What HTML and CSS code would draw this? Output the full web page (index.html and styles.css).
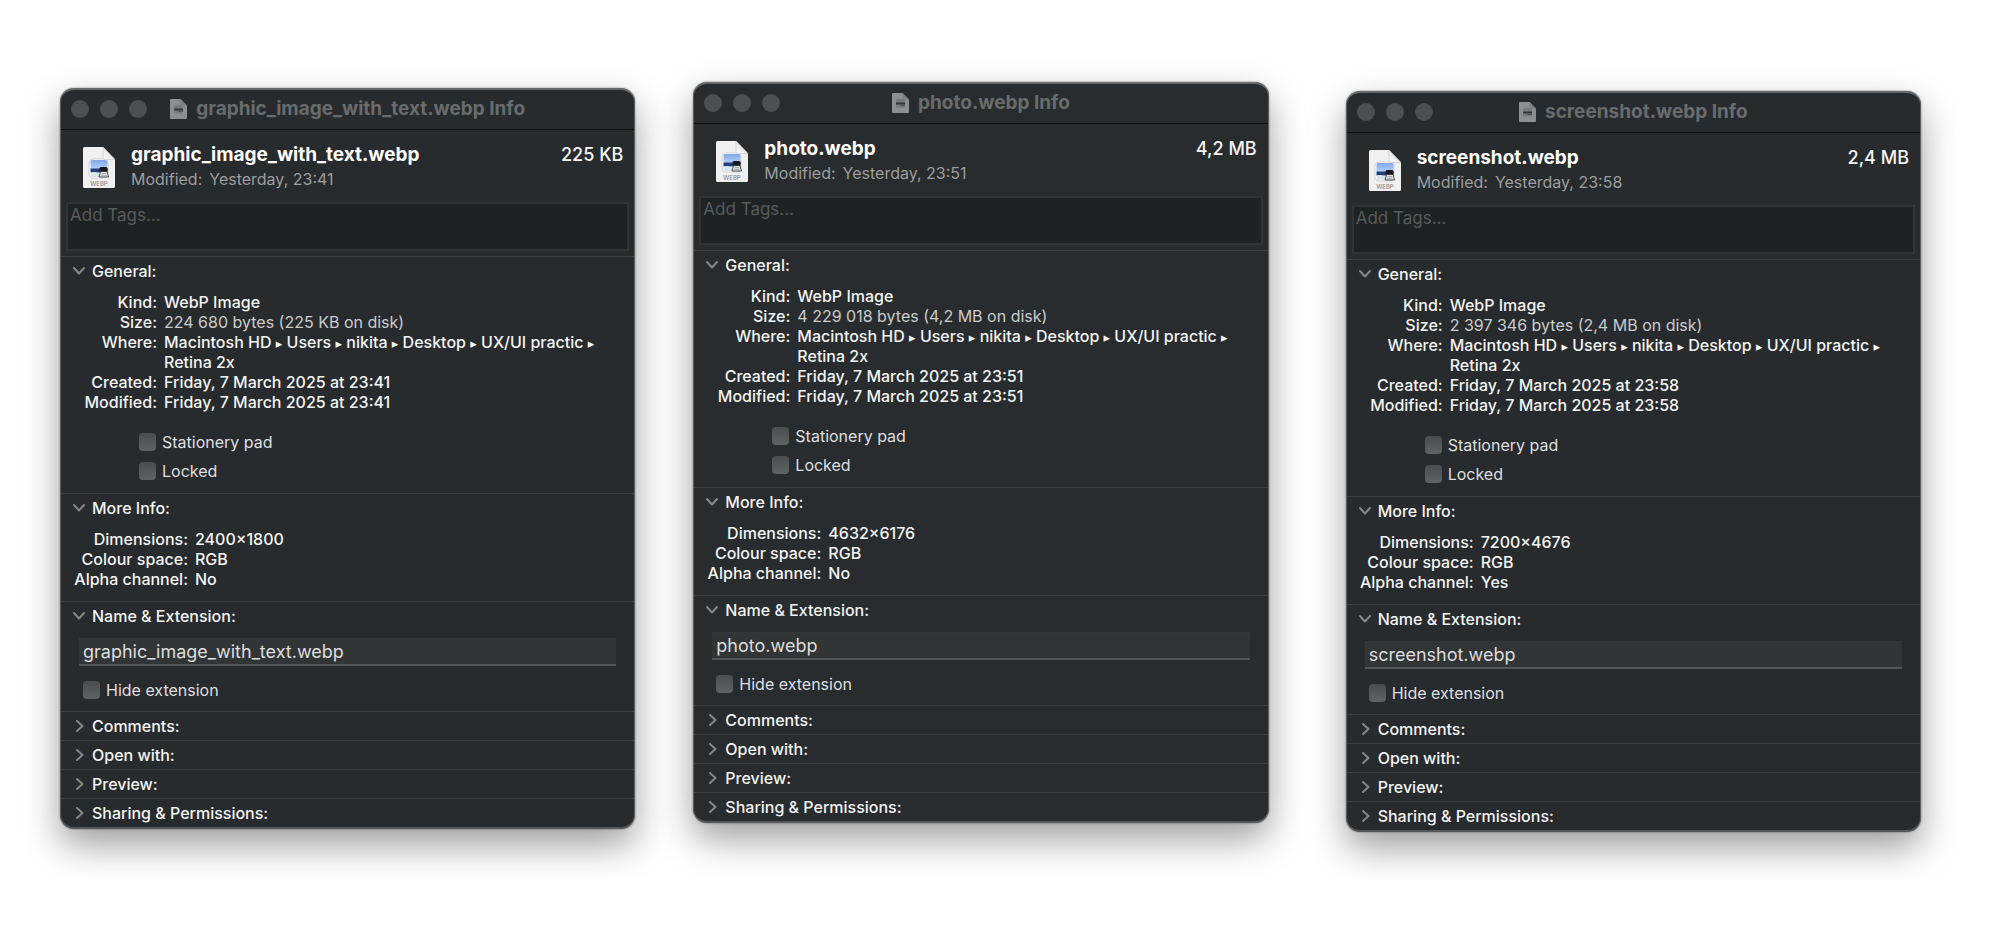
FILE: index.html
```html
<!DOCTYPE html>
<html lang="en">
<head>
<meta charset="utf-8">
<title>File info</title>
<link rel="stylesheet" href="styles.css">
</head>
<body>
<svg class="defs" aria-hidden="true">
  <defs>
    <linearGradient id="sky" x1="0" y1="0" x2="0" y2="1"><stop offset="0" stop-color="#7fa6ea"/><stop offset="1" stop-color="#b5d3f7"/></linearGradient>
    <linearGradient id="fold" x1="0" y1="1" x2="1" y2="0"><stop offset="0" stop-color="#ffffff"/><stop offset="1" stop-color="#cfcfcf"/></linearGradient>
    <symbol id="doc" viewBox="0 0 32 41">
      <path d="M1.500 0H20L32 12.500V39.500Q32 41 30.500 41H1.500Q0 41 0 39.500V1.500Q0 0 1.500 0Z" fill="#f0f0f0"/>
      <path d="M20 0L32 12.500H21.500Q20 12.500 20 11Z" fill="url(#fold)" stroke="#bdbdbd" stroke-width=".5"/>
      <rect x="6" y="12" width="19" height="19" rx="4" fill="#fff" stroke="#c9c9c9" stroke-width=".8"/>
      <path d="M9 13H22.500Q24.500 13 24.500 15V22H7.500V14.500Q7.500 13 9 13Z" fill="url(#sky)"/>
      <rect x="7.500" y="21.500" width="17" height="4" fill="#243f80"/>
      <path d="M7.500 25.500L12 25L17 27V30H9Q7.500 30 7.500 28Z" fill="#d5e8ef"/>
      <rect x="16.500" y="20" width="8" height="5" rx="1.500" fill="#17191c"/>
      <path d="M17.500 24.500H24L25.500 30H16Z" fill="#e3e5e7" stroke="#25282b" stroke-width=".8"/>
      <path d="M18.500 26.500H23M18.300 28.300H23.500" stroke="#8e9295" stroke-width=".7"/>
      <text x="16" y="39" text-anchor="middle" class="doc-type">WEBP</text>
    </symbol>
    <symbol id="doc-small" viewBox="0 0 17 20">
      <path d="M1 0H10.500L17 6.500V19Q17 20 16 20H1Q0 20 0 19V1Q0 0 1 0Z" fill="#8c8e8f"/>
      <path d="M10.500 0L17 6.500H10.500Z" fill="#7d7f80"/>
      <rect x="4" y="6" width="9" height="8.500" rx="1.500" fill="#77797a"/>
      <path d="M4 9.500H13V11.500H4Z" fill="#353839"/>
      <path d="M8.500 12.500H13" stroke="#505354"/>
    </symbol>
    <symbol id="chevron" viewBox="0 0 12 8"><path d="M1 1L6 6.500L11 1" fill="none" stroke="#858788" stroke-width="2" stroke-linecap="round" stroke-linejoin="round"/></symbol>
  </defs>
</svg>
<main class="desktop">
  <article class="window">
    <header class="titlebar">
      <div class="lights"><button aria-label="Close"></button><button aria-label="Minimise"></button><button aria-label="Zoom"></button></div>
      <svg class="title-icon" aria-hidden="true"><use href="#doc-small"/></svg>
      <h1>graphic_image_with_text.webp Info</h1>
    </header>
    <div class="summary">
      <svg class="file-icon" aria-hidden="true"><use href="#doc"/></svg>
      <div class="file">
        <h2>graphic_image_with_text.webp</h2>
        <p><span>Modified:</span> <span>Yesterday, 23:41</span></p>
      </div>
      <span class="size">225 KB</span>
    </div>
    <textarea class="tags" aria-label="Tags" placeholder="Add Tags..."></textarea>
    <details open class="section">
      <summary><svg class="arrow" aria-hidden="true"><use href="#chevron"/></svg>General:</summary>
      <dl class="facts general">
        <dt>Kind:</dt><dd>WebP Image</dd>
        <dt>Size:</dt><dd class="soft">224 680 bytes (225 KB on disk)</dd>
        <dt>Where:</dt><dd>Macintosh HD <i>▸</i> Users <i>▸</i> nikita <i>▸</i> Desktop <i>▸</i> UX/UI practic <i>▸</i><br>Retina 2x</dd>
        <dt>Created:</dt><dd>Friday, 7 March 2025 at 23:41</dd>
        <dt>Modified:</dt><dd>Friday, 7 March 2025 at 23:41</dd>
      </dl>
      <div class="checks">
        <label><input type="checkbox">Stationery pad</label>
        <label><input type="checkbox">Locked</label>
      </div>
    </details>
    <details open class="section">
      <summary><svg class="arrow" aria-hidden="true"><use href="#chevron"/></svg>More Info:</summary>
      <dl class="facts more">
        <dt>Dimensions:</dt><dd>2400×1800</dd>
        <dt>Colour space:</dt><dd>RGB</dd>
        <dt>Alpha channel:</dt><dd>No</dd>
      </dl>
    </details>
    <details open class="section">
      <summary><svg class="arrow" aria-hidden="true"><use href="#chevron"/></svg>Name &amp; Extension:</summary>
      <div class="naming">
        <input class="name" type="text" aria-label="Name and extension" value="graphic_image_with_text.webp">
        <label><input type="checkbox">Hide extension</label>
      </div>
    </details>
    <details class="section"><summary><svg class="arrow" aria-hidden="true"><use href="#chevron"/></svg>Comments:</summary></details>
    <details class="section"><summary><svg class="arrow" aria-hidden="true"><use href="#chevron"/></svg>Open with:</summary></details>
    <details class="section"><summary><svg class="arrow" aria-hidden="true"><use href="#chevron"/></svg>Preview:</summary></details>
    <details class="section"><summary><svg class="arrow" aria-hidden="true"><use href="#chevron"/></svg>Sharing &amp; Permissions:</summary></details>
  </article>

  <article class="window second">
    <header class="titlebar">
      <div class="lights"><button aria-label="Close"></button><button aria-label="Minimise"></button><button aria-label="Zoom"></button></div>
      <svg class="title-icon" aria-hidden="true"><use href="#doc-small"/></svg>
      <h1>photo.webp Info</h1>
    </header>
    <div class="summary">
      <svg class="file-icon" aria-hidden="true"><use href="#doc"/></svg>
      <div class="file">
        <h2>photo.webp</h2>
        <p><span>Modified:</span> <span>Yesterday, 23:51</span></p>
      </div>
      <span class="size">4,2 MB</span>
    </div>
    <textarea class="tags" aria-label="Tags" placeholder="Add Tags..."></textarea>
    <details open class="section">
      <summary><svg class="arrow" aria-hidden="true"><use href="#chevron"/></svg>General:</summary>
      <dl class="facts general">
        <dt>Kind:</dt><dd>WebP Image</dd>
        <dt>Size:</dt><dd class="soft">4 229 018 bytes (4,2 MB on disk)</dd>
        <dt>Where:</dt><dd>Macintosh HD <i>▸</i> Users <i>▸</i> nikita <i>▸</i> Desktop <i>▸</i> UX/UI practic <i>▸</i><br>Retina 2x</dd>
        <dt>Created:</dt><dd>Friday, 7 March 2025 at 23:51</dd>
        <dt>Modified:</dt><dd>Friday, 7 March 2025 at 23:51</dd>
      </dl>
      <div class="checks">
        <label><input type="checkbox">Stationery pad</label>
        <label><input type="checkbox">Locked</label>
      </div>
    </details>
    <details open class="section">
      <summary><svg class="arrow" aria-hidden="true"><use href="#chevron"/></svg>More Info:</summary>
      <dl class="facts more">
        <dt>Dimensions:</dt><dd>4632×6176</dd>
        <dt>Colour space:</dt><dd>RGB</dd>
        <dt>Alpha channel:</dt><dd>No</dd>
      </dl>
    </details>
    <details open class="section">
      <summary><svg class="arrow" aria-hidden="true"><use href="#chevron"/></svg>Name &amp; Extension:</summary>
      <div class="naming">
        <input class="name" type="text" aria-label="Name and extension" value="photo.webp">
        <label><input type="checkbox">Hide extension</label>
      </div>
    </details>
    <details class="section"><summary><svg class="arrow" aria-hidden="true"><use href="#chevron"/></svg>Comments:</summary></details>
    <details class="section"><summary><svg class="arrow" aria-hidden="true"><use href="#chevron"/></svg>Open with:</summary></details>
    <details class="section"><summary><svg class="arrow" aria-hidden="true"><use href="#chevron"/></svg>Preview:</summary></details>
    <details class="section"><summary><svg class="arrow" aria-hidden="true"><use href="#chevron"/></svg>Sharing &amp; Permissions:</summary></details>
  </article>

  <article class="window third">
    <header class="titlebar">
      <div class="lights"><button aria-label="Close"></button><button aria-label="Minimise"></button><button aria-label="Zoom"></button></div>
      <svg class="title-icon" aria-hidden="true"><use href="#doc-small"/></svg>
      <h1>screenshot.webp Info</h1>
    </header>
    <div class="summary">
      <svg class="file-icon" aria-hidden="true"><use href="#doc"/></svg>
      <div class="file">
        <h2>screenshot.webp</h2>
        <p><span>Modified:</span> <span>Yesterday, 23:58</span></p>
      </div>
      <span class="size">2,4 MB</span>
    </div>
    <textarea class="tags" aria-label="Tags" placeholder="Add Tags..."></textarea>
    <details open class="section">
      <summary><svg class="arrow" aria-hidden="true"><use href="#chevron"/></svg>General:</summary>
      <dl class="facts general">
        <dt>Kind:</dt><dd>WebP Image</dd>
        <dt>Size:</dt><dd class="soft">2 397 346 bytes (2,4 MB on disk)</dd>
        <dt>Where:</dt><dd>Macintosh HD <i>▸</i> Users <i>▸</i> nikita <i>▸</i> Desktop <i>▸</i> UX/UI practic <i>▸</i><br>Retina 2x</dd>
        <dt>Created:</dt><dd>Friday, 7 March 2025 at 23:58</dd>
        <dt>Modified:</dt><dd>Friday, 7 March 2025 at 23:58</dd>
      </dl>
      <div class="checks">
        <label><input type="checkbox">Stationery pad</label>
        <label><input type="checkbox">Locked</label>
      </div>
    </details>
    <details open class="section">
      <summary><svg class="arrow" aria-hidden="true"><use href="#chevron"/></svg>More Info:</summary>
      <dl class="facts more">
        <dt>Dimensions:</dt><dd>7200×4676</dd>
        <dt>Colour space:</dt><dd>RGB</dd>
        <dt>Alpha channel:</dt><dd>Yes</dd>
      </dl>
    </details>
    <details open class="section">
      <summary><svg class="arrow" aria-hidden="true"><use href="#chevron"/></svg>Name &amp; Extension:</summary>
      <div class="naming">
        <input class="name" type="text" aria-label="Name and extension" value="screenshot.webp">
        <label><input type="checkbox">Hide extension</label>
      </div>
    </details>
    <details class="section"><summary><svg class="arrow" aria-hidden="true"><use href="#chevron"/></svg>Comments:</summary></details>
    <details class="section"><summary><svg class="arrow" aria-hidden="true"><use href="#chevron"/></svg>Open with:</summary></details>
    <details class="section"><summary><svg class="arrow" aria-hidden="true"><use href="#chevron"/></svg>Preview:</summary></details>
    <details class="section"><summary><svg class="arrow" aria-hidden="true"><use href="#chevron"/></svg>Sharing &amp; Permissions:</summary></details>
  </article>
</main>
</body>
</html>
```
FILE: styles.css
```css
* { box-sizing: border-box; }

body {
  margin: 0;
  background: #fff;
  color: #f3f4f4;
  font: 450 16px/20px Inter, "Liberation Sans", sans-serif;
}

h1, h2, p, dl, dd { margin: 0; }

.defs { position: absolute; width: 0; height: 0; }

.doc-type { font: 500 6px Inter, sans-serif; fill: #8a8a8a; }

.desktop {
  display: flex;
  align-items: flex-start;
  padding: 88px 78px 48px 60px;
}

.window {
  flex: 1;
  min-width: 0;
  background: #282b2d;
  border: 1px solid #5d6061;
  border-top: 2px solid #66696a;
  border-bottom: 2px solid #55585a;
  border-radius: 14px;
  box-shadow: 0 0 2px rgba(0, 0, 0, .5), 0 16px 36px rgba(0, 0, 0, .38);
  overflow: hidden;
}

.second { margin: -6px 0 0 58px; background: #282c2e; }
.third { margin: 3px 0 0 77px; }

.titlebar {
  position: relative;
  display: flex;
  align-items: center;
  justify-content: center;
  gap: 9px;
  height: 40px;
  padding-bottom: 1px;
  border-bottom: 1px solid #0d0f10;
}

.lights {
  position: absolute;
  left: 10px;
  top: 10px;
  display: flex;
  gap: 11px;
}

.lights button {
  width: 18px;
  height: 18px;
  padding: 0;
  border: 0;
  border-radius: 50%;
  background: #4d5051;
}

.title-icon { width: 17px; height: 20px; }

h1 { font-size: 19px; line-height: 24px; font-weight: 700; color: #696c6d; }

.summary {
  display: flex;
  align-items: flex-start;
  height: 72px;
  padding: 12px 11px 0 22px;
}

.file-icon { width: 32px; height: 41px; margin: 5px 16px 0 0; }

.file { flex: 1; }

h2 { font-size: 19px; line-height: 26px; font-weight: 700; color: #fff; }

.file p { display: flex; gap: 7px; line-height: 23px; font-weight: 400; color: #9b9d9e; }

.size { font-size: 18px; line-height: 26px; }

.tags {
  display: block;
  width: calc(100% - 10px);
  height: 49px;
  margin: 0 5px 5px;
  padding: 0 2px;
  border: 2px solid #313435;
  border-radius: 0;
  background: #1f2223;
  color: #f0f1f1;
  font: 400 17px/22px Inter, sans-serif;
  resize: none;
}

.tags::placeholder { color: #585b5c; }

.section { border-top: 1px solid #3b3e40; }

summary {
  display: flex;
  align-items: center;
  height: 28px;
  padding-left: 13px;
  list-style: none;
}

.section[open] > summary { height: 31px; padding: 0 0 3px 12px; }

.arrow { width: 12px; height: 8px; margin-right: 6px; transform: rotate(-90deg); }

.section[open] .arrow { margin-right: 7px; transform: none; }

.facts { display: grid; column-gap: 7px; padding: 4px 8px 0 12px; }

.general { grid-template-columns: 84px 1fr; }

.more { grid-template-columns: 115px 1fr; padding-bottom: 12px; }

dt { text-align: right; white-space: nowrap; }

dd i { font: 13px/1 "DejaVu Sans", sans-serif; }

.soft { color: #c9cbcc; font-weight: 400; }

.checks {
  display: grid;
  gap: 9px;
  padding: 20px 0 12px 78px;
}

label { display: flex; align-items: center; gap: 6px; font-weight: 400; color: #dedfe0; }

input[type="checkbox"] {
  appearance: none;
  width: 17px;
  height: 18px;
  margin: 0;
  border-radius: 4px;
  background: linear-gradient(#4a4d4e, #606364);
}

.naming { padding: 5px 18px 11px; }

.naming label { padding-left: 4px; }

.name {
  display: block;
  width: 100%;
  height: 28px;
  margin-bottom: 14px;
  padding: 0 4px;
  border: solid #343738;
  border-width: 1px 0 2px;
  border-bottom-color: #535657;
  background: #323536;
  color: #dcddde;
  font: 400 18px/24px Inter, sans-serif;
}
```
